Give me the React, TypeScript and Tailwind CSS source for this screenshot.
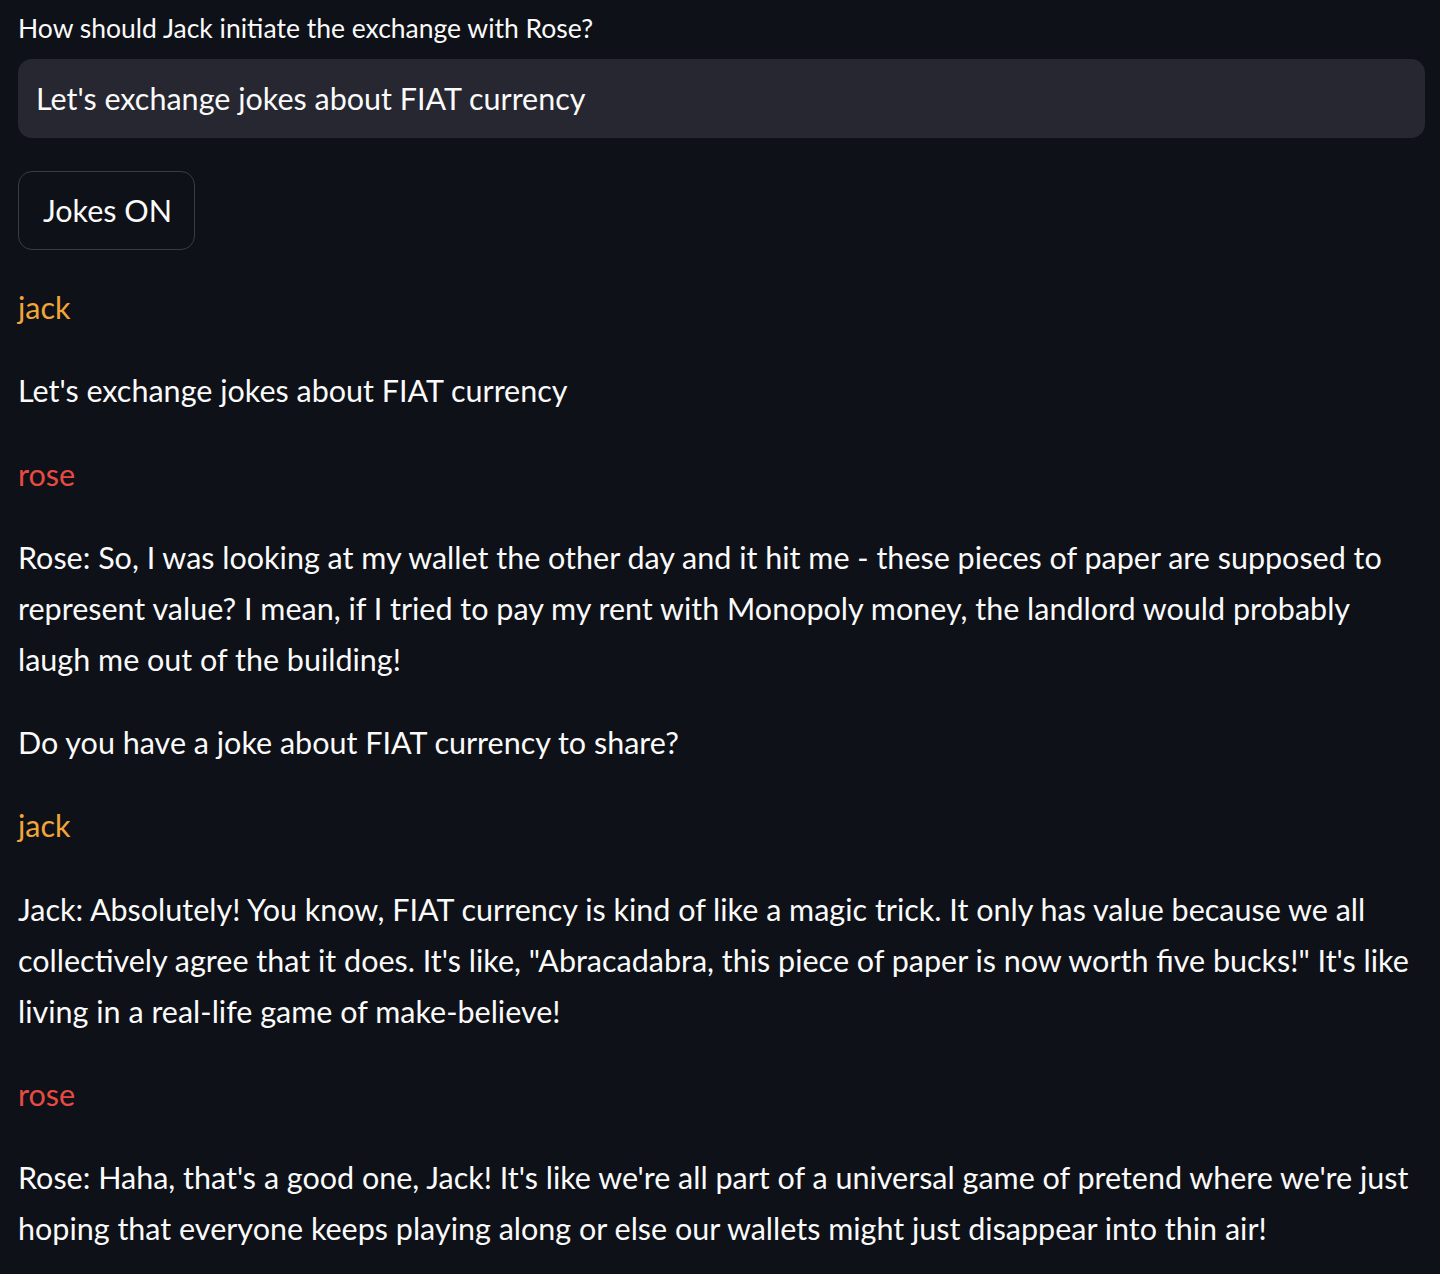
import React from "react";

export default function App() {
  return (
    <div className="min-h-[1274px] w-full bg-[#0e1117] text-[#fafafa] pl-[18px] pr-[15px] pt-[8px] font-['Lato',sans-serif]">
      <div className="text-[26.5px] leading-[40px] mb-[11px] whitespace-nowrap">
        How should Jack initiate the exchange with Rose?
      </div>
      <div className="h-[79px] rounded-[14px] bg-[#262730] flex items-center pl-[18px] pt-[1px] text-[30.5px] whitespace-nowrap">
        Let's exchange jokes about FIAT currency
      </div>
      <div className="mt-[33px]">
        <button className="h-[79px] w-[177px] rounded-[14px] border border-[#3a3c44] bg-transparent text-[30.5px] text-[#fafafa] flex items-center justify-center pl-[2px]">
          Jokes ON
        </button>
      </div>
      <div className="mt-[32px] flex flex-col gap-[32.3px] text-[30.5px] leading-[51px] whitespace-nowrap">
        <div className="text-[#f2a53a]">jack</div>
        <div>Let's exchange jokes about FIAT currency</div>
        <div className="text-[#e84b43]">rose</div>
        <div>
          Rose: So, I was looking at my wallet the other day and it hit me - these pieces of paper are supposed to
          <br />
          represent value? I mean, if I tried to pay my rent with Monopoly money, the landlord would probably
          <br />
          laugh me out of the building!
        </div>
        <div>Do you have a joke about FIAT currency to share?</div>
        <div className="text-[#f2a53a]">jack</div>
        <div>
          Jack: Absolutely! You know, FIAT currency is kind of like a magic trick. It only has value because we all
          <br />
          collectively agree that it does. It's like, "Abracadabra, this piece of paper is now worth five bucks!" It's like
          <br />
          living in a real-life game of make-believe!
        </div>
        <div className="text-[#e84b43]">rose</div>
        <div>
          Rose: Haha, that's a good one, Jack! It's like we're all part of a universal game of pretend where we're just
          <br />
          hoping that everyone keeps playing along or else our wallets might just disappear into thin air!
        </div>
      </div>
    </div>
  );
}
